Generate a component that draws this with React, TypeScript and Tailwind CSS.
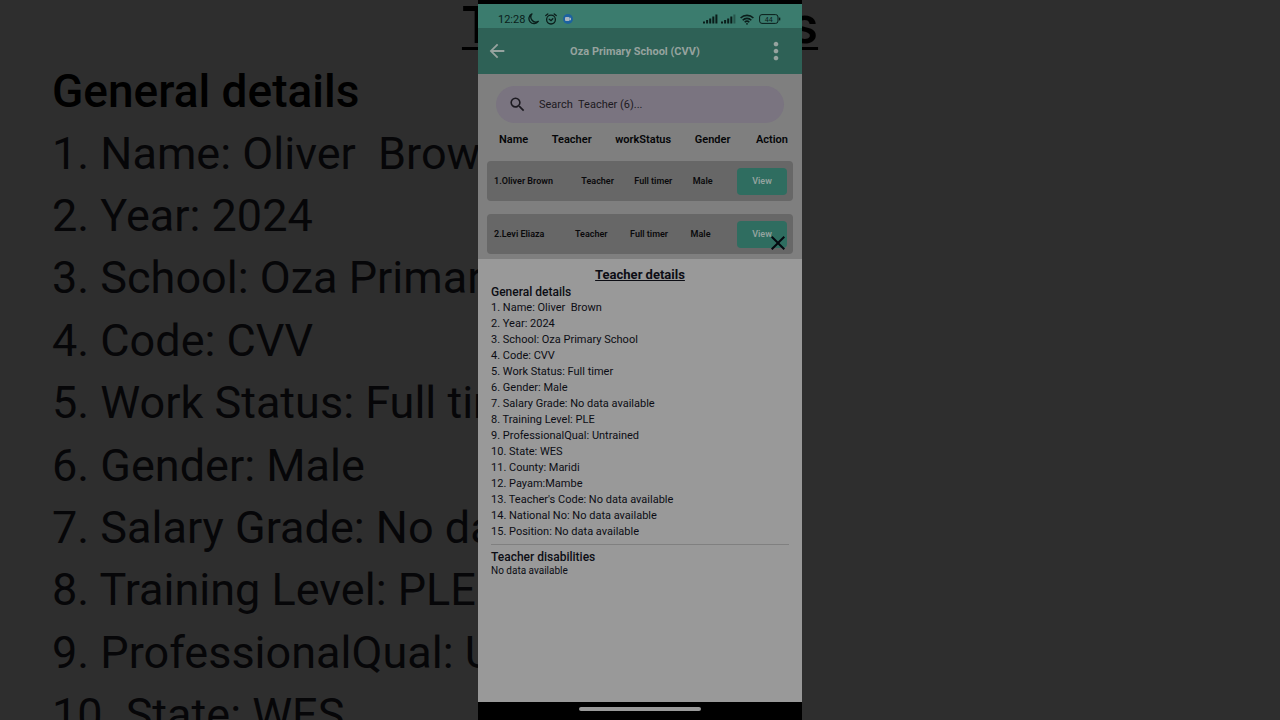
import { MdArrowBack, MdClose, MdMoreVert, MdSearch } from 'react-icons/md';

const details = [
  'Name: Oliver  Brown',
  'Year: 2024',
  'School: Oza Primary School',
  'Code: CVV',
  'Work Status: Full timer',
  'Gender: Male',
  'Salary Grade: No data available',
  'Training Level: PLE',
  'ProfessionalQual: Untrained',
  'State: WES',
  'County: Maridi',
  'Payam:Mambe',
  "Teacher's Code: No data available",
  'National No: No data available',
  'Position: No data available',
];

const teachers = [
  { name: 'Oliver Brown', role: 'Teacher', status: 'Full timer', gender: 'Male' },
  { name: 'Levi Eliaza', role: 'Teacher', status: 'Full timer', gender: 'Male' },
];

function Signal({ weak = false }: { weak?: boolean }) {
  return (
    <svg width="15" height="10" viewBox="0 0 15 10" fill="#0a1d1a">
      <rect x="0" y="7.5" width="2" height="2" />
      <rect x="3.1" y="6" width="2" height="3.5" />
      <rect x="6.2" y="4.5" width="2" height="5" />
      <rect x="9.3" y="2.5" width="2" height="7" />
      <rect x="12.4" y="0.5" width="2" height="9" opacity={weak ? 0.4 : 1} />
    </svg>
  );
}

function StatusBar() {
  return (
    <div className="flex h-6 items-center justify-between bg-[#3b7c6e] pt-1.5 pr-[21px] pb-0 pl-5 text-[#0a1d1a]">
      <div className="flex items-center gap-0.5">
        <span className="pt-px text-[11px] leading-3">12:28</span>
        <svg width="12" height="12" viewBox="0 0 12 12" fill="none" stroke="#0a1d1a" strokeWidth="1.3" strokeLinejoin="round">
          <path d="M5 0.9A5.1 5.1 0 1 0 11.3 8.4 5 5 0 0 1 5 0.9Z" />
        </svg>
        <svg className="ml-1" width="12" height="12" viewBox="0 0 12 12" fill="none" stroke="#0a1d1a" strokeWidth="1.3" strokeLinecap="round">
          <circle cx="6" cy="6.6" r="4.4" />
          <path d="M0.8 2.6 2.8 0.9M11.2 2.6 9.2 0.9M4.2 6.2 6 7.6 7.8 5.8" />
        </svg>
        <svg className="ml-1" width="10" height="10" viewBox="0 0 10 10">
          <circle cx="5" cy="5" r="5" fill="#1c62a0" />
          <rect x="2" y="3" width="4.6" height="4" rx="1" fill="#a9b6c0" />
          <path d="M6.2 4.7 8 3.5v3L6.2 5.4Z" fill="#a9b6c0" />
        </svg>
      </div>
      <div className="flex items-center gap-[3px]">
        <Signal />
        <Signal weak />
        <svg className="ml-px" width="14" height="11" viewBox="0 0 14 11" fill="none" stroke="#0a1d1a" strokeWidth="1.6">
          <path d="M0.6 4a9 9 0 0 1 12.8 0M2.7 6.2a6 6 0 0 1 8.6 0M4.7 8.2a3.3 3.3 0 0 1 4.6 0" />
          <circle cx="7" cy="9.8" r="0.9" fill="#0a1d1a" stroke="none" />
        </svg>
        <svg className="ml-0.5" width="22" height="10" viewBox="0 0 22 10" fill="none" stroke="#0a1d1a">
          <rect x="0.6" y="0.6" width="18.4" height="8.8" rx="2.4" />
          <path d="M20.6 3.6v2.8" strokeWidth="1.4" />
          <text x="9.8" y="7.5" textAnchor="middle" fontSize="7" fill="#0a1d1a" stroke="none">44</text>
        </svg>
      </div>
    </div>
  );
}

function Header() {
  return (
    <header className="flex h-[46px] items-center justify-between bg-[#2e6156] pr-3 pl-2 text-[#96a39f]">
      <button aria-label="Back">
        <MdArrowBack size={22} />
      </button>
      <h1 className="pt-0.5 text-[11px] leading-4 font-bold">Oza Primary School (CVV)</h1>
      <button aria-label="More options">
        <MdMoreVert size={28} />
      </button>
    </header>
  );
}

function TeacherList() {
  return (
    <section className="bg-[#7f7f7f] px-[9px] pt-3 pb-[5px]">
      <label className="mx-[9px] flex h-[37px] items-center gap-3 rounded-full bg-[#7a7480] pl-3 text-[#1c1a20]">
        <MdSearch size={19} />
        <span className="sr-only">Search teachers</span>
        <input
          type="text"
          placeholder="Search  Teacher (6)..."
          className="min-w-0 flex-1 bg-transparent pt-0.5 text-[11px] outline-none placeholder:text-[#1c1a20]"
        />
      </label>

      <table className="mt-[9px] block">
        <thead className="block">
          <tr className="flex justify-between pr-[5px] pl-3 text-[11px] leading-4 text-[#050608]">
            <th className="font-semibold">Name</th>
            <th className="font-semibold">Teacher</th>
            <th className="font-semibold">workStatus</th>
            <th className="pr-0.5 font-semibold">Gender</th>
            <th className="font-semibold">Action</th>
          </tr>
        </thead>
        <tbody className="mt-[13px] flex flex-col gap-[13px]">
          {teachers.map((teacher, i) => (
            <tr
              key={teacher.name}
              className="flex h-10 items-center justify-between rounded bg-[#676767] pr-1.5 pl-[7px] text-[9px] leading-3 font-semibold text-[#0a0a0c]"
            >
              <td className="pr-2">{i + 1}.{teacher.name}</td>
              <td>{teacher.role}</td>
              <td>{teacher.status}</td>
              <td className="pr-1">{teacher.gender}</td>
              <td>
                <button className="block h-[27px] w-[50px] rounded bg-[#2f6d60] text-[#93a39f]">View</button>
              </td>
            </tr>
          ))}
        </tbody>
      </table>
    </section>
  );
}

function DetailsSheet() {
  return (
    <section className="relative flex-1 bg-[#999999] px-[13px] pt-2 text-[#0c0d14]">
      <button aria-label="Close" className="absolute -top-7 right-3 text-[#05090f]">
        <MdClose size={24} />
      </button>
      <h2 className="text-center text-[13px] leading-4 font-bold underline">Teacher details</h2>
      <h3 className="mt-px text-[12px] leading-4 font-medium">General details</h3>
      <ol className="grid min-h-[242px] items-center border-b border-[#808080] pb-1 text-[11px] leading-4 whitespace-pre">
        {details.map((detail, i) => (
          <li key={detail}>{i + 1}. {detail}</li>
        ))}
      </ol>
      <h3 className="mt-1 text-[12px] leading-4 font-medium">Teacher disabilities</h3>
      <p className="text-[10px] leading-3">No data available</p>
    </section>
  );
}

// Enlarged, dimmed copy of the sheet that fills the space beside the phone
function Backdrop() {
  return (
    <div aria-hidden="true" className="absolute inset-0 overflow-hidden text-black">
      <p className="text-center text-[52px] leading-[52px] font-medium underline decoration-3 underline-offset-4">
        Teacher details
      </p>
      <div className="w-[calc(50%-162px)] overflow-hidden pt-2 pl-[52px] whitespace-pre">
        <p className="text-[46px] leading-[62px] font-medium">General details</p>
        <ol className="grid h-[624px] items-center text-[45px] leading-none text-[#060608]">
          {details.slice(0, 10).map((detail, i) => (
            <li key={detail}>{i + 1}. {detail}</li>
          ))}
        </ol>
      </div>
    </div>
  );
}

export default function App() {
  return (
    <div className="relative h-screen overflow-hidden bg-[#2e2e2e] font-[Roboto,sans-serif]">
      <Backdrop />
      <main className="relative mx-auto flex h-full w-full max-w-[324px] flex-col bg-black pt-1">
        <StatusBar />
        <Header />
        <TeacherList />
        <DetailsSheet />
        <div className="flex h-[18px] justify-center pt-[5px]">
          <div className="h-1 w-[122px] rounded-full bg-[#999999]" />
        </div>
      </main>
    </div>
  );
}
